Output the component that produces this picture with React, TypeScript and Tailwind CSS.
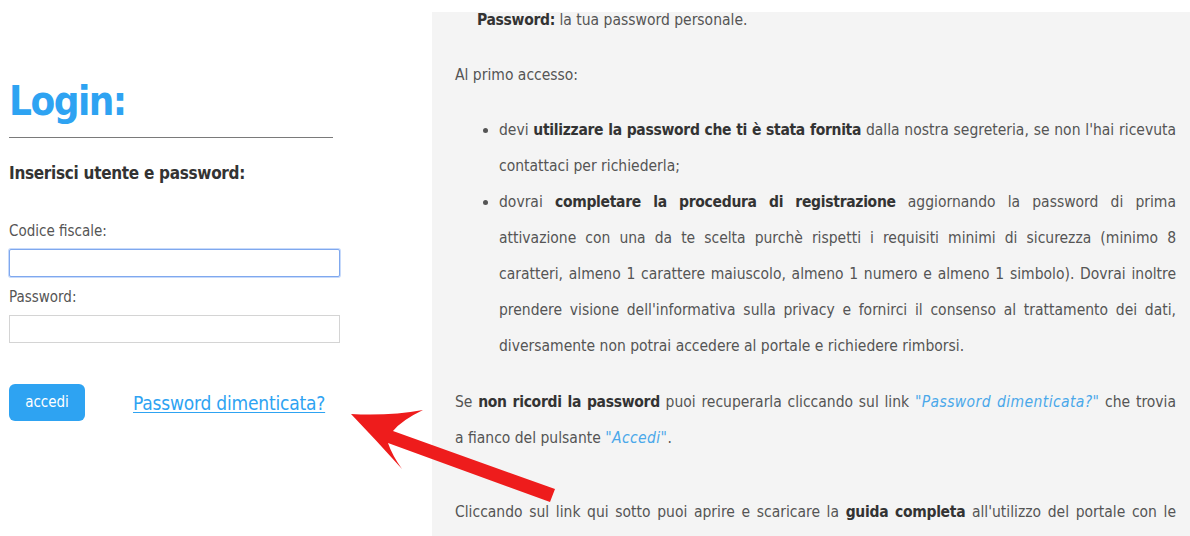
const font = { fontFamily: '"DejaVu Sans Condensed", "DejaVu Sans", sans-serif', fontStretch: "condensed" };

function Arrow() {
  return (
    <svg className="pointer-events-none absolute left-0 top-0" width="1190" height="536" viewBox="0 0 1190 536">
      <path
        d="M351 414 Q390 416 423 410 Q402 420 393 431 L555 489 L550 502 L388 443 Q392 455 402 469 Q376 440 351 414 Z"
        fill="#ee1c1c"
      />
    </svg>
  );
}

function LoginForm() {
  return (
    <div className="w-[331px] shrink-0 pl-[9px] pt-[72px] box-content">
      <h1 className="text-[40px] font-bold leading-[58px] tracking-[-1.5px] text-[#2ea3f2]">Login:</h1>
      <hr className="mt-[7px] w-[324px] border-t border-[#7a7a7a]" />
      <h3 className="mt-[22px] text-[17px] font-bold leading-[26px] tracking-[-0.3px] text-[#333]">Inserisci utente e password:</h3>
      <label className="mt-[35px] block text-[15px] leading-[20px] text-[#555]">Codice fiscale:</label>
      <input className="mt-[8px] block h-[28px] w-[331px] rounded-[2px] border border-[#7fa8ee] bg-white shadow-[0_0_0_1px_#c7dafb] outline-none" />
      <label className="mt-[10px] block text-[15px] leading-[20px] text-[#555]">Password:</label>
      <input type="password" className="mt-[8px] block h-[28px] w-[331px] border border-[#d4d4d4] bg-white outline-none" />
      <div className="mt-[41px] flex items-center">
        <button className="h-[37px] w-[76px] rounded-[6px] bg-[#2ea3f2] text-[15px] text-white">accedi</button>
        <a href="#" className="ml-[48px] text-[19px] leading-[24px] tracking-[-0.2px] text-[#2ea3f2] underline underline-offset-2">Password dimenticata?</a>
      </div>
    </div>
  );
}

function Strong({ children }: { children: React.ReactNode }) {
  return <b className="tracking-[-0.3px] text-[#333]">{children}</b>;
}

function Quote({ children }: { children: React.ReactNode }) {
  return <i className="tracking-[0.4px] text-[#4aa8ea]">{children}</i>;
}

function InfoPanel() {
  return (
    <div className="ml-[92px] mt-[12px] h-[524px] flex-1 overflow-hidden bg-[#f4f4f4] pl-[23px] pr-[14px] text-[15.5px] leading-[36px] text-[#555]">
      <div className="-mt-[10px] text-justify">
        <p className="pl-[22px]">
          <Strong>Password:</Strong> la tua password personale.
        </p>
        <p className="mt-[19px]">Al primo accesso:</p>
        <ul className="mt-[19px] list-disc pl-[44px] marker:text-[#555]">
          <li>
            devi <Strong>utilizzare la password che ti è stata fornita</Strong> dalla nostra segreteria, se non l'hai ricevuta contattaci per richiederla;
          </li>
          <li>
            dovrai <Strong>completare la procedura di registrazione</Strong> aggiornando la password di prima attivazione con una da te scelta purchè rispetti i requisiti minimi di sicurezza (minimo 8 caratteri, almeno 1 carattere maiuscolo, almeno 1 numero e almeno 1 simbolo). Dovrai inoltre prendere visione dell'informativa sulla privacy e fornirci il consenso al trattamento dei dati, diversamente non potrai accedere al portale e richiedere rimborsi.
          </li>
        </ul>
        <p className="mt-[20px]">
          Se <Strong>non ricordi la password</Strong> puoi recuperarla cliccando sul link <Quote>"Password dimenticata?"</Quote> che trovia a&nbsp;fianco del pulsante <Quote>"Accedi"</Quote>.
        </p>
        <p className="mt-[38px]">
          Cliccando sul link qui sotto puoi aprire e scaricare la <Strong>guida completa</Strong> all'utilizzo del portale con le istruzioni passo per passo per la registrazione e per la richiesta dei rimborsi.
        </p>
      </div>
    </div>
  );
}

export default function App() {
  return (
    <div className="relative flex h-[536px] w-[1190px] overflow-hidden bg-white" style={font}>
      <LoginForm />
      <InfoPanel />
      <Arrow />
    </div>
  );
}
